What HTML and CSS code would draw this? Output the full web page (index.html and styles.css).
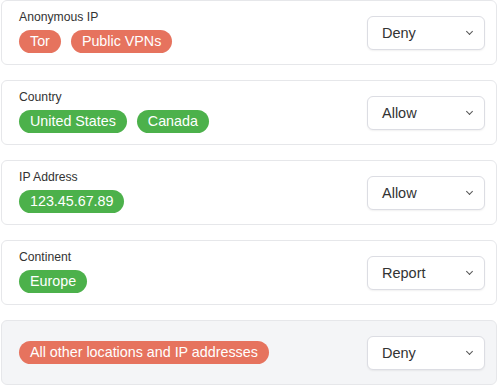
FILE: index.html
```html
<!DOCTYPE html>
<html lang="en">
<head>
    <meta charset="UTF-8">
    <title>Location Rules</title>
    <link rel="stylesheet" href="styles.css">
</head>
<body>
    <div class="rules">
        <div class="rule">
            <div class="rule-info">
                <div class="rule-label">Anonymous IP</div>
                <div class="tags">
                    <span class="tag deny">Tor</span>
                    <span class="tag deny">Public VPNs</span>
                </div>
            </div>
            <div class="select">Deny<span class="chevron"></span></div>
        </div>

        <div class="rule">
            <div class="rule-info">
                <div class="rule-label">Country</div>
                <div class="tags">
                    <span class="tag allow">United States</span>
                    <span class="tag allow">Canada</span>
                </div>
            </div>
            <div class="select">Allow<span class="chevron"></span></div>
        </div>

        <div class="rule">
            <div class="rule-info">
                <div class="rule-label">IP Address</div>
                <div class="tags">
                    <span class="tag allow">123.45.67.89</span>
                </div>
            </div>
            <div class="select">Allow<span class="chevron"></span></div>
        </div>

        <div class="rule">
            <div class="rule-info">
                <div class="rule-label">Continent</div>
                <div class="tags">
                    <span class="tag allow">Europe</span>
                </div>
            </div>
            <div class="select">Report<span class="chevron"></span></div>
        </div>

        <div class="rule rule-default">
            <div class="rule-info">
                <div class="tags">
                    <span class="tag deny">All other locations and IP addresses</span>
                </div>
            </div>
            <div class="select">Deny<span class="chevron"></span></div>
        </div>
    </div>
</body>
</html>
```

FILE: styles.css
```css
body {
    margin: 0;
    font-family: "Liberation Sans", Arial, sans-serif;
    color: #333;
    background: #fff;
}
.rules {
    display: flex;
    flex-direction: column;
    gap: 15px;
    padding-left: 1px;
    width: 496px;
}
.rule {
    box-sizing: border-box;
    height: 65px;
    display: flex;
    align-items: center;
    justify-content: space-between;
    border: 1px solid #e6e7ea;
    border-radius: 6px;
    padding: 0 11px 0 17px;
    background: #fff;
}
.rule-default {
    background: #f4f5f7;
}
.rule-info {
    margin-top: -2px;
}
.rule-label {
    font-size: 12.2px;
    line-height: 15px;
    margin-bottom: 5px;
}
.tags {
    display: flex;
    gap: 10px;
}
.tag {
    display: inline-block;
    height: 23px;
    line-height: 23px;
    padding: 0 11px;
    border-radius: 12px;
    color: #fff;
    font-size: 14.3px;
}
.rule-default .rule-info {
    margin-top: 0;
}
.deny {
    background: #e6735e;
}
.allow {
    background: #4cb14b;
}
.select {
    box-sizing: border-box;
    width: 118px;
    height: 34px;
    display: flex;
    align-items: center;
    justify-content: space-between;
    padding: 0 12px 0 14px;
    border: 1px solid #dcdde3;
    border-radius: 6px;
    background: #fff;
    box-shadow: 0 1px 2px rgba(0, 0, 0, 0.06);
    font-size: 14.5px;
}
.chevron {
    width: 4px;
    height: 4px;
    border-right: 1.5px solid #555;
    border-bottom: 1.5px solid #555;
    transform: rotate(45deg);
    margin-top: -3px;
}
```
